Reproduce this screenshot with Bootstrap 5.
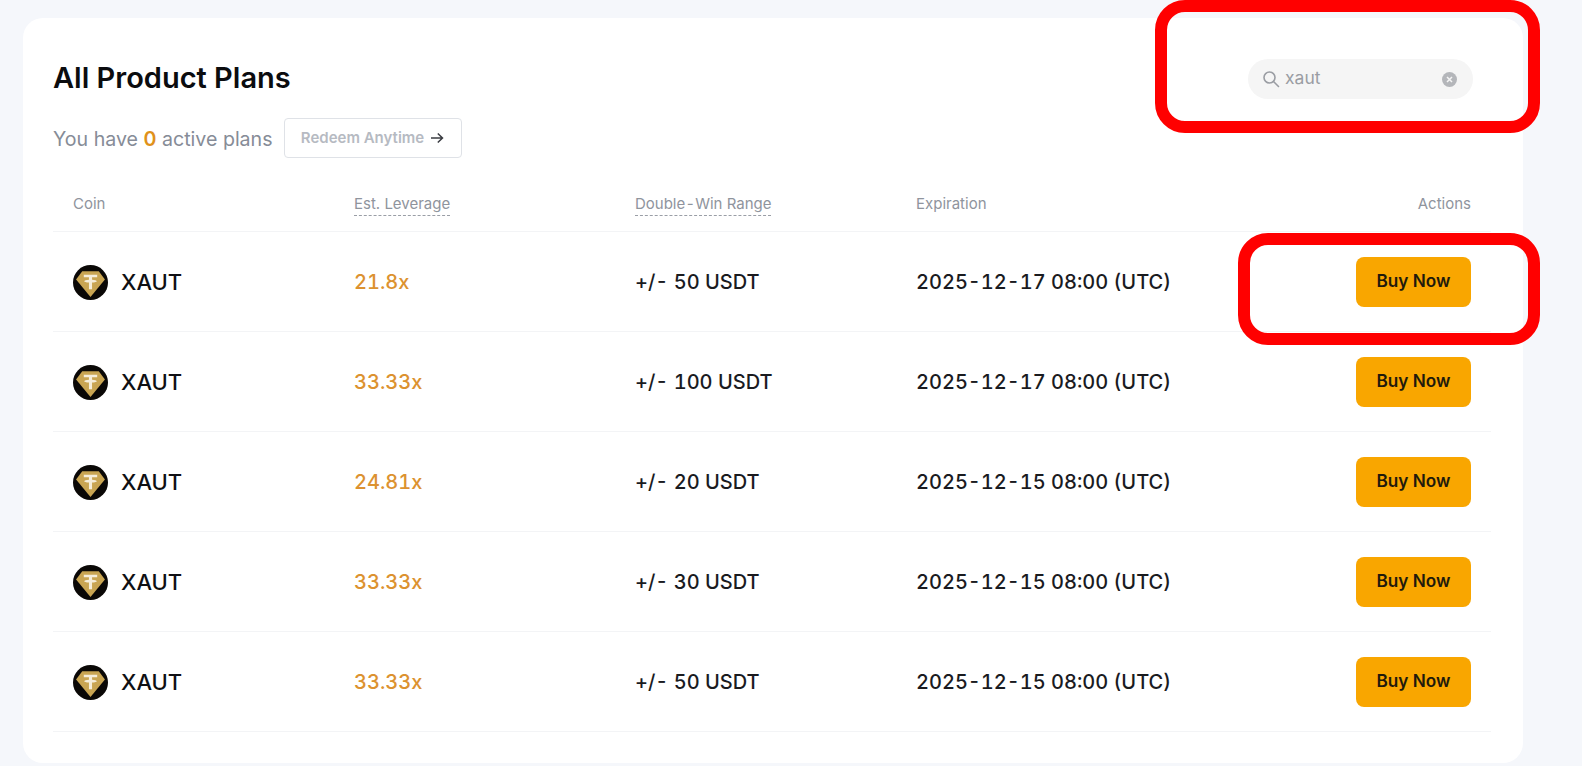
<!DOCTYPE html>
<html lang="en">
<head>
<meta charset="utf-8">
<title>All Product Plans</title>
<link href="https://cdn.jsdelivr.net/npm/bootstrap@5.3.0/dist/css/bootstrap.min.css" rel="stylesheet">
<style>
html,body{height:766px;overflow:hidden;}
body{background:#f5f7fb;font-family:Inter,"Liberation Sans",sans-serif;padding:18px 59px 0 23px;color:#1a1b1f;}
.plan-card{background:#fff;border-radius:20px;height:745px;padding:41px 31px 0 30px;position:relative;}
.plan-title{font-size:29px;font-weight:600;line-height:38px;padding-bottom:2px;color:#0b0c0f;margin:0;}
.plan-search{width:225px;height:40px;background:#f5f5f5;border-radius:20px;padding:0 16px 0 14px;gap:5px;font-size:17.500px;color:#9a9da3;margin-right:19px;}
.search-text{padding-bottom:2px;}
.plan-sub{font-size:19.600px;color:#868c97;margin-top:19px;height:40px;gap:11px;}
.sub-text{padding-top:3px;}
.plan-sub b{color:#e0911a;font-weight:600;}
.redeem-btn{width:178px;height:40px;border:1px solid #dfe2e7;border-radius:4px;background:#fff;font-size:15px;font-weight:600;color:#b6bac2;padding:0;gap:6px;}
.plan-table{margin:20px 0 0;table-layout:fixed;width:1438px;}
.plan-table th,.plan-table td{padding:0 20px;border-bottom:1px solid #f3f4f6;vertical-align:middle;box-shadow:none;white-space:nowrap;}
.plan-table th{height:53px;font-size:15px;font-weight:400;color:#8f949d;}
.plan-table td{height:100px;padding-top:2px;font-size:20px;font-weight:500;color:#1a1b1f;font-variant-numeric:tabular-nums;}
.dash-label{border-bottom:1px dashed #9a9ea6;padding-bottom:2px;}
.coin-name{font-size:22px;gap:13px;color:#0f1013;}
.lev{color:#dc9230!important;}
.wide-dash{padding:0 1.500px;}
.buy-btn{width:115px;height:50px;background:#f9a600;border:0;border-radius:8px;font-size:17.200px;font-weight:600;color:#1f1a0c;padding:0 0 2px;}
.mark-box{position:absolute;border:12px solid #ff0000;border-radius:30px;pointer-events:none;}
.mark-a{left:1155px;top:0;width:385px;height:133px;}
.mark-b{left:1238px;top:233px;width:302px;height:112px;}
</style>
</head>
<body>
<svg width="0" height="0" class="position-absolute">
<symbol id="xaut" viewBox="0 0 34 34">
<circle cx="17" cy="17" r="17" fill="#0a0806"/>
<path d="M9 6h16l6 8L17 31 3 14z" fill="#c9a552"/>
<path d="M10.500 9.500h13v2.500h-5v2.400c2.700.2 4.600.7 4.600 1.300s-1.900 1.100-4.600 1.300v6.500h-3V17c-2.700-.2-4.600-.7-4.600-1.300s1.900-1.100 4.600-1.300V12h-5z" fill="#f6eeda"/>
</symbol>
</svg>
<main class="plan-card">
<div class="d-flex justify-content-between align-items-center">
<h1 class="plan-title">All Product Plans</h1>
<div class="plan-search d-flex align-items-center">
<svg width="18" height="18" viewBox="0 0 18 18" fill="none" stroke="#9a9da3" stroke-width="1.600"><circle cx="7.500" cy="7.500" r="5.500"/><path d="M11.500 11.500l5 5" stroke-linecap="round"/></svg>
<span class="flex-grow-1 search-text">xaut</span>
<svg width="15" height="15" viewBox="0 0 15 15"><circle cx="7.500" cy="7.500" r="7.500" fill="#b4b6ba"/><path d="M5 5l5 5M10 5l-5 5" stroke="#f5f5f5" stroke-width="1.500"/></svg>
</div>
</div>
<div class="plan-sub d-flex align-items-center">
<span class="sub-text">You have <b>0</b> active plans</span>
<button type="button" class="redeem-btn btn d-flex align-items-center justify-content-center">Redeem Anytime
<svg width="14" height="14" viewBox="0 0 14 14" fill="none" stroke="#3a3c42" stroke-width="1.500"><path d="M1 7h11.500M7.800 2.500L12.500 7l-4.700 4.500"/></svg>
</button>
</div>
<table class="table plan-table">
<colgroup><col style="width:281px"><col style="width:281px"><col style="width:281px"><col style="width:281px"><col></colgroup>
<thead><tr><th>Coin</th><th><span class="dash-label">Est. Leverage</span></th><th><span class="dash-label">Double<span class="wide-dash">-</span>Win Range</span></th><th>Expiration</th><th class="text-end">Actions</th></tr></thead>
<tbody>
<tr><td><div class="coin-name d-flex align-items-center"><svg width="35" height="35"><use href="#xaut"/></svg>XAUT</div></td><td class="lev">21.8x</td><td>+/- 50 USDT</td><td>2025-12-17 08:00 (UTC)</td><td class="text-end"><button type="button" class="btn buy-btn">Buy Now</button></td></tr>
<tr><td><div class="coin-name d-flex align-items-center"><svg width="35" height="35"><use href="#xaut"/></svg>XAUT</div></td><td class="lev">33.33x</td><td>+/- 100 USDT</td><td>2025-12-17 08:00 (UTC)</td><td class="text-end"><button type="button" class="btn buy-btn">Buy Now</button></td></tr>
<tr><td><div class="coin-name d-flex align-items-center"><svg width="35" height="35"><use href="#xaut"/></svg>XAUT</div></td><td class="lev">24.81x</td><td>+/- 20 USDT</td><td>2025-12-15 08:00 (UTC)</td><td class="text-end"><button type="button" class="btn buy-btn">Buy Now</button></td></tr>
<tr><td><div class="coin-name d-flex align-items-center"><svg width="35" height="35"><use href="#xaut"/></svg>XAUT</div></td><td class="lev">33.33x</td><td>+/- 30 USDT</td><td>2025-12-15 08:00 (UTC)</td><td class="text-end"><button type="button" class="btn buy-btn">Buy Now</button></td></tr>
<tr><td><div class="coin-name d-flex align-items-center"><svg width="35" height="35"><use href="#xaut"/></svg>XAUT</div></td><td class="lev">33.33x</td><td>+/- 50 USDT</td><td>2025-12-15 08:00 (UTC)</td><td class="text-end"><button type="button" class="btn buy-btn">Buy Now</button></td></tr>
</tbody>
</table>
</main>
<div class="mark-box mark-a"></div>
<div class="mark-box mark-b"></div>
</body>
</html>
